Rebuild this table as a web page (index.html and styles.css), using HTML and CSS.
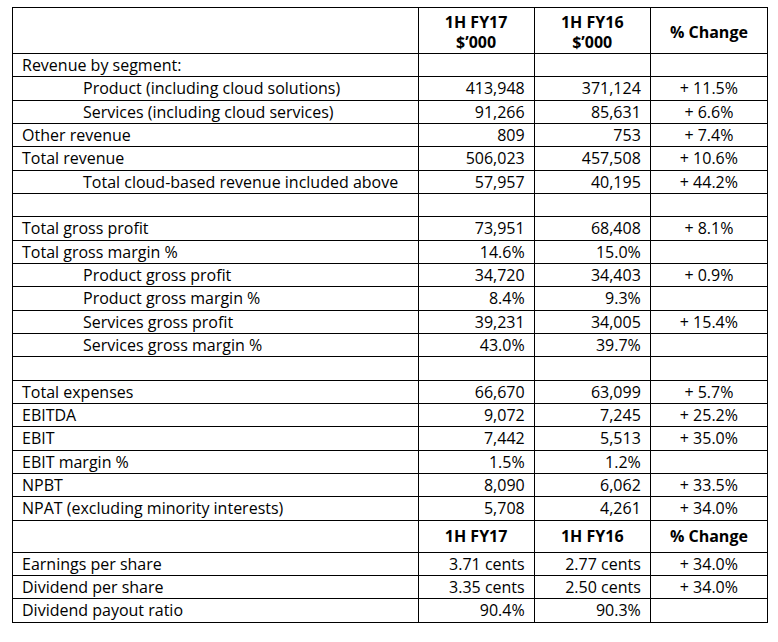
FILE: index.html
```html
<!DOCTYPE html>
<html>
<head>
<meta charset="utf-8">
<link rel="stylesheet" href="styles.css">
</head>
<body>
<table class="fin">
  <colgroup>
    <col class="c-label">
    <col class="c-num">
    <col class="c-num">
    <col class="c-chg">
  </colgroup>
  <tr class="head">
    <td></td>
    <th>1H FY17<br>$’000</th>
    <th>1H FY16<br>$’000</th>
    <th>% Change</th>
  </tr>
  <tr><td class="lbl">Revenue by segment:</td><td></td><td></td><td></td></tr>
  <tr><td class="lbl ind">Product (including cloud solutions)</td><td class="num">413,948</td><td class="num">371,124</td><td class="chg">+ 11.5%</td></tr>
  <tr><td class="lbl ind">Services (including cloud services)</td><td class="num">91,266</td><td class="num">85,631</td><td class="chg">+ 6.6%</td></tr>
  <tr><td class="lbl">Other revenue</td><td class="num">809</td><td class="num">753</td><td class="chg">+ 7.4%</td></tr>
  <tr><td class="lbl">Total revenue</td><td class="num">506,023</td><td class="num">457,508</td><td class="chg">+ 10.6%</td></tr>
  <tr><td class="lbl ind">Total cloud-based revenue included above</td><td class="num">57,957</td><td class="num">40,195</td><td class="chg">+ 44.2%</td></tr>
  <tr><td class="lbl"></td><td></td><td></td><td></td></tr>
  <tr><td class="lbl">Total gross profit</td><td class="num">73,951</td><td class="num">68,408</td><td class="chg">+ 8.1%</td></tr>
  <tr><td class="lbl">Total gross margin %</td><td class="num">14.6%</td><td class="num">15.0%</td><td class="chg"></td></tr>
  <tr><td class="lbl ind">Product gross profit</td><td class="num">34,720</td><td class="num">34,403</td><td class="chg">+ 0.9%</td></tr>
  <tr><td class="lbl ind">Product gross margin %</td><td class="num">8.4%</td><td class="num">9.3%</td><td class="chg"></td></tr>
  <tr><td class="lbl ind">Services gross profit</td><td class="num">39,231</td><td class="num">34,005</td><td class="chg">+ 15.4%</td></tr>
  <tr><td class="lbl ind">Services gross margin %</td><td class="num">43.0%</td><td class="num">39.7%</td><td class="chg"></td></tr>
  <tr><td class="lbl"></td><td></td><td></td><td></td></tr>
  <tr><td class="lbl">Total expenses</td><td class="num">66,670</td><td class="num">63,099</td><td class="chg">+ 5.7%</td></tr>
  <tr><td class="lbl">EBITDA</td><td class="num">9,072</td><td class="num">7,245</td><td class="chg">+ 25.2%</td></tr>
  <tr><td class="lbl">EBIT</td><td class="num">7,442</td><td class="num">5,513</td><td class="chg">+ 35.0%</td></tr>
  <tr><td class="lbl">EBIT margin %</td><td class="num">1.5%</td><td class="num">1.2%</td><td class="chg"></td></tr>
  <tr><td class="lbl">NPBT</td><td class="num">8,090</td><td class="num">6,062</td><td class="chg">+ 33.5%</td></tr>
  <tr><td class="lbl">NPAT (excluding minority interests)</td><td class="num">5,708</td><td class="num">4,261</td><td class="chg">+ 34.0%</td></tr>
  <tr class="head2">
    <td></td>
    <th>1H FY17</th>
    <th>1H FY16</th>
    <th>% Change</th>
  </tr>
  <tr><td class="lbl">Earnings per share</td><td class="num">3.71 cents</td><td class="num">2.77 cents</td><td class="chg">+ 34.0%</td></tr>
  <tr><td class="lbl">Dividend per share</td><td class="num">3.35 cents</td><td class="num">2.50 cents</td><td class="chg">+ 34.0%</td></tr>
  <tr><td class="lbl">Dividend payout ratio</td><td class="num">90.4%</td><td class="num">90.3%</td><td class="chg"></td></tr>
</table>
</body>
</html>
```
FILE: styles.css
```css
html, body {
  background: #ffffff;
}
body {
  margin: 0;
  padding: 7px 0 0 12px;
  font-family: "Open Sans", Lato, sans-serif;
  font-size: 16px;
  color: #000000;
}
.fin {
  border-collapse: collapse;
  table-layout: fixed;
  width: 756px;
}
.c-label { width: 405px; }
.c-num { width: 116px; }
.c-chg { width: 117px; }
.fin td, .fin th {
  border: 1px solid #000;
  padding: 0 9px;
  height: 22.33px;
  line-height: 18px;
  vertical-align: middle;
  white-space: nowrap;
  overflow: hidden;
}
.fin th {
  font-weight: bold;
  font-size: 16px;
  text-align: center;
  padding: 0 4px;
}
.fin .head td, .fin .head th {
  height: 43px;
  padding-top: 2px;
  line-height: 20px;
}
.fin .head2 td, .fin .head2 th {
  height: 31px;
}
.fin .lbl { text-align: left; }
.fin .ind { padding-left: 70px; }
.fin .num { text-align: right; }
.fin .chg { text-align: center; }
```
